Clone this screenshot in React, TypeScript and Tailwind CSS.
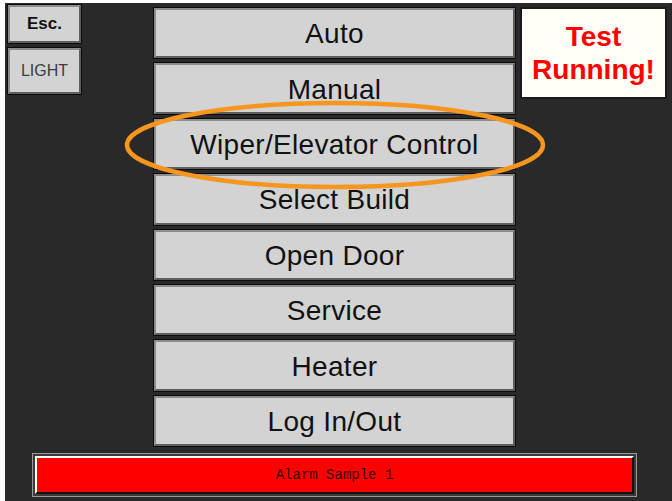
import React from 'react';

const MENU = ['Auto', 'Manual', 'Wiper/Elevator Control', 'Select Build', 'Open Door', 'Service', 'Heater', 'Log In/Out'];

const Bevel = ({ className, children }: { className?: string; children: React.ReactNode }) => (
  <div className={`bg-[#0c0c0c] p-px ${className ?? ''}`}>
    <div className="h-full w-full border-2 border-t-[#8c8c8c] border-l-[#8c8c8c] border-b-[#5e5e5e] border-r-[#5e5e5e] bg-[#d3d3d3] flex items-center justify-center">
      {children}
    </div>
  </div>
);

export default function App() {
  return (
    <div className="w-[672px] h-[501px] bg-white pl-[5px] pt-[3px] relative overflow-hidden" style={{ fontFamily: '"Liberation Sans", Arial, sans-serif' }}>
      <div className="w-full h-full bg-[#292929] flex flex-col">
        <div className="flex">
          {/* left small buttons */}
          <div className="ml-[2px] mt-[1px] w-[75px] flex flex-col gap-[3px]">
            <Bevel className="h-[40px]">
              <span className="text-[17px] font-bold text-[#111]">Esc.</span>
            </Bevel>
            <Bevel className="h-[48px]">
              <span className="text-[16px] text-[#3c3c3c]">LIGHT</span>
            </Bevel>
          </div>

          {/* main menu */}
          <div className="ml-[71px] mt-[4px] w-[363px] flex flex-col gap-[3px]">
            {MENU.map((m) => (
              <Bevel key={m} className="h-[52.4px]">
                <span className="text-[28px] text-[#111] tracking-[0.3px] pt-[2px]">{m}</span>
              </Bevel>
            ))}
          </div>

          {/* status box */}
          <div className="ml-[4px] mt-[4px] w-[147px] h-[92px] border-2 border-[#1a1a1a] bg-[#fffff7] flex flex-col items-center justify-center">
            <span className="text-[28px] leading-[33px] font-bold text-[#ff0000]">Test</span>
            <span className="text-[28px] leading-[33px] font-bold text-[#ff0000]">Running!</span>
          </div>
        </div>

        {/* alarm bar */}
        <div className="ml-[27px] mt-[6px] w-[605px] h-[44px] border border-[#9a9a9a] p-[2px] bg-[#3a3a3a]">
          <div className="h-full w-full border-2 border-t-white border-l-white border-b-[#111] border-r-[#111] bg-[#ff0000] flex items-center justify-center">
            <span className="text-[14px] text-[#3a0000]" style={{ fontFamily: '"Liberation Mono", monospace' }}>Alarm Sample 1</span>
          </div>
        </div>
      </div>

      {/* highlight ring */}
      <svg className="absolute left-[122px] top-[98px]" width="428" height="94" viewBox="0 0 428 94">
        <ellipse cx="213" cy="47" rx="208" ry="42" fill="none" stroke="#f7961e" strokeWidth="4.5" />
      </svg>
    </div>
  );
}
